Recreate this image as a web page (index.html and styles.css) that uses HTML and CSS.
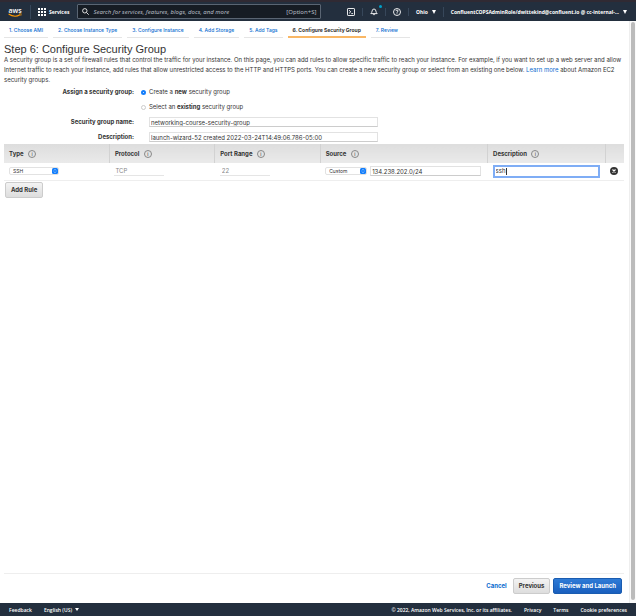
FILE: index.html
```html
<!DOCTYPE html>
<html lang="en">
<head>
    <meta charset="UTF-8">
    <meta name="viewport" content="width=device-width, initial-scale=1.0">
    <title>Launch instance wizard</title>
    <link rel="stylesheet" href="styles.css">
</head>
<body>

<!-- Top navigation -->
<header class="topbar">
    <a class="logo" href="#" aria-label="AWS">
        <svg width="14" height="14" viewBox="0 0 14 14">
            <text x="7" y="8" text-anchor="middle" class="logo-text">aws</text>
            <path d="M0.6 9 Q6.5 13 12 9.8" fill="none" stroke="#f90" stroke-width="1.1"/>
            <path d="M11 8.9 L13.2 8.7 L12.8 10.8" fill="none" stroke="#f90" stroke-width="0.7"/>
        </svg>
    </a>
    <button class="services" type="button">
        <svg width="8" height="8" viewBox="0 0 8 8" fill="#fff">
            <path d="M0 0h2v2H0zM3 0h2v2H3zM6 0h2v2H6zM0 3h2v2H0zM3 3h2v2H3zM6 3h2v2H6zM0 6h2v2H0zM3 6h2v2H3zM6 6h2v2H6z"/>
        </svg>
        Services
    </button>
    <div class="search">
        <svg width="7" height="7" viewBox="0 0 7 7" fill="none" stroke="#ddd">
            <circle cx="2.8" cy="2.8" r="2.2"/>
            <path d="M4.4 4.4L6.7 6.7"/>
        </svg>
        <input type="text" aria-label="Search" placeholder="Search for services, features, blogs, docs, and more">
        <span class="shortcut">[Option+S]</span>
    </div>
    <div class="top-icons">
        <button type="button" aria-label="CloudShell">
            <svg width="8" height="8" viewBox="0 0 8 8" fill="none" stroke="#fff" stroke-width="0.9">
                <rect x="0.5" y="0.5" width="7" height="7" rx="0.6"/>
                <path d="M2 2.2L3.8 3.8L2 5.4M4.3 5.6h1.8"/>
            </svg>
        </button>
        <button type="button" aria-label="Notifications">
            <svg width="8" height="8" viewBox="0 0 8 8" fill="none" stroke="#fff" stroke-width="0.9">
                <path d="M0.8 5.6Q2 4.6 2.1 3Q2.3 1 4 1Q5.7 1 5.9 3Q6 4.6 7.2 5.6zM3.1 6.2Q4 8 4.9 6.2"/>
            </svg>
            <span class="dot"></span>
        </button>
        <button type="button" aria-label="Help">
            <svg width="8" height="8" viewBox="0 0 8 8" fill="none" stroke="#fff" stroke-width="0.9">
                <circle cx="4" cy="4" r="3.5"/>
                <path d="M2.9 3.1Q3 2.1 4 2.1Q5.1 2.1 5.1 3Q5.1 3.6 4 4.2V4.8M4 5.4V6.2"/>
            </svg>
        </button>
    </div>
    <button class="region" type="button">Ohio <span class="caret"></span></button>
    <button class="account" type="button">ConfluentCOPSAdminRole/dwittekind@confluent.io @ cc-internal-... <span class="caret"></span></button>
</header>

<div class="viewport">
    <main class="content">
        <!-- Wizard steps -->
        <nav class="steps">
            <a href="#">1. Choose AMI</a>
            <a href="#">2. Choose Instance Type</a>
            <a href="#">3. Configure Instance</a>
            <a href="#">4. Add Storage</a>
            <a href="#">5. Add Tags</a>
            <a href="#" class="active">6. Configure Security Group</a>
            <a href="#" class="last">7. Review</a>
        </nav>

        <h1>Step 6: Configure Security Group</h1>
        <p class="intro">A security group is a set of firewall rules that control the traffic for your instance. On this page, you can add rules to allow specific traffic to reach your instance. For example, if you want to set up a web server and allow Internet traffic to reach your instance, add rules that allow unrestricted access to the HTTP and HTTPS ports. You can create a new security group or select from an existing one below. <a href="#">Learn more</a> about Amazon EC2 security groups.</p>

        <!-- Group details -->
        <form class="group-form">
            <div class="form-row" role="radiogroup" aria-labelledby="assign">
                <span class="form-label" id="assign">Assign a security group:</span>
                <label class="choice"><input type="radio" name="assign" checked> <span>Create a <b>new</b> security group</span></label>
            </div>
            <div class="form-row">
                <span class="form-label"></span>
                <label class="choice"><input type="radio" name="assign"> <span>Select an <b>existing</b> security group</span></label>
            </div>
            <div class="form-row">
                <label class="form-label" for="group-name">Security group name:</label>
                <input class="field" type="text" id="group-name" value="networking-course-security-group">
            </div>
            <div class="form-row">
                <label class="form-label" for="group-desc">Description:</label>
                <input class="field" type="text" id="group-desc" value="launch-wizard-52 created 2022-03-24T14:49:06.786-05:00">
            </div>
        </form>

        <!-- Rules -->
        <table class="rules">
            <colgroup>
                <col class="col-type"><col class="col-protocol"><col class="col-port"><col class="col-source"><col class="col-desc"><col class="col-remove">
            </colgroup>
            <thead>
                <tr>
                    <th>Type <span class="info">i</span></th>
                    <th>Protocol <span class="info">i</span></th>
                    <th>Port Range <span class="info">i</span></th>
                    <th>Source <span class="info">i</span></th>
                    <th>Description <span class="info">i</span></th>
                    <th></th>
                </tr>
            </thead>
            <tbody>
                <tr>
                    <td>
                        <div class="select type-select">
                            <select aria-label="Type"><option>SSH</option></select>
                            <svg width="6" height="6" viewBox="0 0 6 6"><rect width="6" height="6" rx="1.5" fill="#147efb"/><path d="M2 2.4L3 1.4L4 2.4M2 3.6L3 4.6L4 3.6" fill="none" stroke="#fff" stroke-width="0.6"/></svg>
                        </div>
                    </td>
                    <td><input class="readonly" type="text" aria-label="Protocol" value="TCP" readonly></td>
                    <td><input class="readonly port" type="text" aria-label="Port range" value="22" readonly></td>
                    <td>
                        <div class="source">
                            <div class="select source-select">
                                <select aria-label="Source"><option>Custom</option></select>
                                <svg width="6" height="6" viewBox="0 0 6 6"><rect width="6" height="6" rx="1.5" fill="#147efb"/><path d="M2 2.4L3 1.4L4 2.4M2 3.6L3 4.6L4 3.6" fill="none" stroke="#fff" stroke-width="0.6"/></svg>
                            </div>
                            <input class="field cidr" type="text" aria-label="Source CIDR" value="134.238.202.0/24">
                        </div>
                    </td>
                    <td>
                        <div class="desc-box">
                            <input type="text" aria-label="Rule description" value="ssh">
                            <span class="text-cursor"></span>
                        </div>
                    </td>
                    <td>
                        <button class="remove" type="button" aria-label="Remove rule">
                            <svg width="8" height="8" viewBox="0 0 8 8"><circle cx="4" cy="4" r="4" fill="#333"/><path d="M2.5 2.5l3 3M5.5 2.5l-3 3" stroke="#fff" stroke-width="1.1"/></svg>
                        </button>
                    </td>
                </tr>
            </tbody>
        </table>
        <button class="btn" type="button">Add Rule</button>

        <!-- Wizard actions -->
        <div class="actions">
            <a href="#">Cancel</a>
            <button class="btn" type="button">Previous</button>
            <button class="btn primary" type="button">Review and Launch</button>
        </div>
    </main>
    <div class="scrollbar"><div class="thumb"></div></div>
</div>

<footer class="footer">
    <a href="#">Feedback</a>
    <button class="language" type="button">English (US) <span class="caret"></span></button>
    <span class="copyright">© 2022, Amazon Web Services, Inc. or its affiliates.</span>
    <a href="#">Privacy</a>
    <a href="#">Terms</a>
    <a href="#">Cookie preferences</a>
</footer>

</body>
</html>
```

FILE: styles.css
```css
* {
    box-sizing: border-box;
}

body {
    display: flex;
    flex-direction: column;
    height: 100vh;
    margin: 0;
    background-color: white;
    color: #333;
    font-family: Inter, "Liberation Sans", Arial, sans-serif;
    font-size: 6px;
    line-height: 10px;
}

a {
    color: #0a6ccf;
    text-decoration: none;
}

button,
input,
select {
    margin: 0;
    padding: 0;
    border: none;
    outline: none;
    background: none;
    color: inherit;
    font: inherit;
}

svg {
    display: block;
    flex: none;
}

/* Top navigation */
.topbar {
    display: flex;
    align-items: center;
    height: 21px;
    padding: 0 9px 0 8px;
    border-top: 2px solid #302a33;
    background-color: #232f3e;
    color: white;
    font-family: "Noto Sans", "Open Sans", sans-serif;
    font-size: 5px;
    font-weight: 700;
    white-space: nowrap;
}

.logo {
    padding-right: 8px;
    border-right: 1px solid #37475a;
}

.logo-text {
    fill: white;
    font-family: "Open Sans", sans-serif;
    font-size: 7px;
    font-weight: 600;
}

.services {
    display: flex;
    align-items: center;
    gap: 3px;
    padding: 0 8px 0 7px;
}

.search {
    display: flex;
    align-items: center;
    gap: 4px;
    width: 244px;
    height: 15px;
    padding: 0 4px;
    border: 1px solid #5a6573;
    border-radius: 1px;
    background-color: #161c24;
    color: #b5bbc2;
    font-size: 6px;
    font-weight: 400;
}

.search input {
    flex: 1;
    min-width: 0;
    font-style: italic;
}

.search input::placeholder {
    color: #b5bbc2;
}

.top-icons {
    display: flex;
    margin-left: auto;
}

.top-icons button {
    position: relative;
    padding: 0 7px;
    border-right: 1px solid #37475a;
}

.dot {
    position: absolute;
    top: -3px;
    right: 3px;
    width: 3px;
    height: 3px;
    border-radius: 50%;
    background-color: #00a1c9;
}

.region,
.account {
    display: flex;
    align-items: center;
    gap: 4px;
    padding-left: 7px;
}

.region {
    padding-right: 7px;
    border-right: 1px solid #37475a;
}

.caret {
    display: inline-block;
    border-top: 4px solid white;
    border-right: 2px solid transparent;
    border-left: 2px solid transparent;
}

/* Page body */
.viewport {
    display: flex;
    flex: 1;
    min-height: 0;
}

.content {
    display: flex;
    flex: 1;
    flex-direction: column;
    align-items: flex-start;
    min-width: 0;
    padding: 4px 5px 9px 4px;
}

.scrollbar {
    width: 7px;
    padding: 1px 1px 3px;
    border-left: 1px solid #eee;
    background-color: #fafafa;
}

.thumb {
    height: 100%;
    border-radius: 2px;
    background-color: #bbb;
}

/* Wizard steps */
.steps {
    display: flex;
    gap: 5px;
    font-size: 5px;
    font-weight: 500;
    white-space: nowrap;
}

.steps a {
    height: 13px;
    padding: 0 5px;
    border-bottom: 1px solid #e5e5e5;
}

.steps .active {
    border-bottom: 2px solid #f9b765;
    color: #333;
    font-weight: bold;
}

.steps .last {
    padding-right: 12px;
}

h1 {
    margin: 5px 0 0;
    font-family: "Liberation Sans", Arial, sans-serif;
    font-size: 11px;
    font-weight: normal;
    line-height: 12px;
}

.intro {
    margin: 0;
}

/* Group details */
.group-form {
    display: flex;
    flex-direction: column;
    gap: 5px;
    width: 100%;
    padding: 2px 0;
}

.form-row {
    display: flex;
    align-items: center;
    gap: 7px;
    height: 10px;
}

.form-label {
    width: 130px;
    font-weight: bold;
    text-align: right;
}

.choice {
    display: flex;
    align-items: center;
    gap: 3px;
}

.choice input {
    width: 5px;
    height: 5px;
    border: 1px solid #ccc;
    border-radius: 50%;
    appearance: none;
}

.choice input:checked {
    border: 2px solid #147efb;
}

.field {
    height: 10px;
    padding: 0 1px;
    border: 1px solid #e2e2e2;
    border-bottom-color: #ccc;
    line-height: 8px;
}

.form-row .field {
    width: 37%;
    margin-left: 8px;
}

/* Rules */
.rules {
    width: 100%;
    border-collapse: collapse;
    table-layout: fixed;
}

.col-type,
.col-protocol,
.col-port {
    width: 17%;
}

.col-source {
    width: 27%;
}

.col-remove {
    width: 3%;
}

.rules th {
    height: 19px;
    padding: 0 5px;
    border-right: 1px solid #d2d2d2;
    background: linear-gradient(#ddd, #eaeaea);
    text-align: left;
}

.rules th:last-child {
    border-right: none;
}

.rules td {
    height: 17px;
    padding: 0 5px;
    border-bottom: 1px solid #eee;
}

.info {
    display: inline-block;
    width: 8px;
    height: 8px;
    margin-left: 3px;
    border: 1px solid #888;
    border-radius: 50%;
    font-size: 5px;
    font-weight: normal;
    line-height: 6px;
    text-align: center;
}

.select {
    display: flex;
    align-items: center;
    height: 8px;
    border: 1px solid #e2e2e2;
    border-radius: 2px;
    font-size: 5px;
    line-height: 6px;
}

.select select {
    flex: 1;
    min-width: 0;
    padding-left: 3px;
    appearance: none;
}

.type-select {
    width: 50px;
}

.source-select {
    width: 42px;
}

.readonly {
    display: block;
    width: 50px;
    height: 10px;
    padding: 0 1px;
    border-bottom: 1px solid #e5e5e5;
    color: #888;
}

.port {
    padding: 0 2px;
}

.source {
    display: flex;
    align-items: center;
    gap: 3px;
    padding-right: 2px;
}

.cidr {
    flex: 1;
    min-width: 0;
}

.desc-box {
    display: flex;
    align-items: center;
    height: 13px;
    padding: 0 1px;
    border: 2px solid #7fadf5;
}

.desc-box input {
    width: 10px;
}

.text-cursor {
    width: 1px;
    height: 7px;
    background-color: #333;
}

.remove {
    display: block;
}

/* Buttons */
.btn {
    height: 16px;
    padding: 0 5px;
    border: 1px solid #ccc;
    border-radius: 2px;
    background: linear-gradient(#f3f3f3, #ddd);
    font-weight: bold;
}

.rules + .btn {
    margin: 1px 0 0 1px;
}

.btn.primary {
    border-color: #1a5cb0;
    background: linear-gradient(#2f7bd6, #1a5fbe);
    color: white;
}

.actions {
    display: flex;
    align-items: center;
    justify-content: flex-end;
    gap: 3px;
    width: 100%;
    margin-top: auto;
    padding: 4px 2px 0 0;
    border-top: 1px solid #eee;
}

.actions a {
    margin-right: 3px;
    font-weight: bold;
}

/* Footer */
.footer {
    display: flex;
    align-items: center;
    gap: 12px;
    height: 13px;
    padding: 0 9px;
    background-color: #232f3e;
    color: white;
    font-family: "Open Sans", "Noto Sans", sans-serif;
    font-size: 5px;
    font-weight: 600;
    white-space: nowrap;
}

.footer a {
    color: white;
}

.language {
    display: flex;
    align-items: center;
    gap: 3px;
}

.footer .caret {
    border-top-width: 3px;
}

.copyright {
    margin-left: auto;
}
```
